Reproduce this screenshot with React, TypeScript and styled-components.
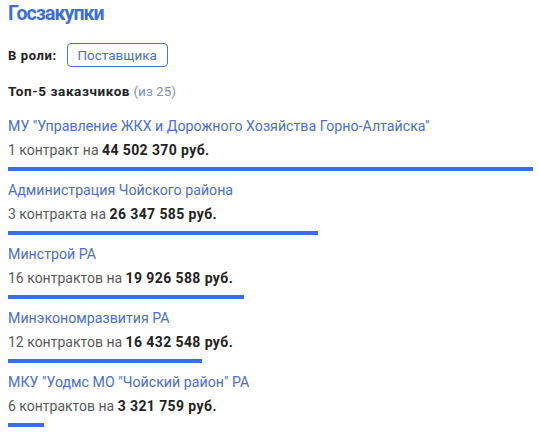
import React from 'react'
import styled, { createGlobalStyle } from 'styled-components'

const GlobalStyle = createGlobalStyle`
  body {
    margin: 0;
    background: #ffffff;
    font-family: Roboto, "Noto Sans", sans-serif;
  }
`

const customers = [
  { name: 'МУ "Управление ЖКХ и Дорожного Хозяйства Горно-Алтайска"', count: '1 контракт', sum: '44 502 370 руб.', width: 525 },
  { name: 'Администрация Чойского района', count: '3 контракта', sum: '26 347 585 руб.', width: 310 },
  { name: 'Минстрой РА', count: '16 контрактов', sum: '19 926 588 руб.', width: 236 },
  { name: 'Минэкономразвития РА', count: '12 контрактов', sum: '16 432 548 руб.', width: 194 },
  { name: 'МКУ "Уодмс МО "Чойский район" РА', count: '6 контрактов', sum: '3 321 759 руб.', width: 36 },
]

export default function App() {
  return <>
    <GlobalStyle />
    <Panel>
      <Title>Госзакупки</Title>
      <RoleRow>
        <Label>В роли:</Label>
        <Badge>Поставщика</Badge>
      </RoleRow>
      <Heading>
        <b>Топ-5 заказчиков</b> <Muted>(из 25)</Muted>
      </Heading>
      {customers.map(c => (
        <Item key={c.name}>
          <Name>{c.name}</Name>
          <Stats>{c.count} на <b>{c.sum}</b></Stats>
          <Bar style={{ width: c.width }} />
        </Item>
      ))}
    </Panel>
  </>
}

const Panel = styled.div`
  padding: 0 8px;
  display: flex;
  flex-direction: column;
`
const Title = styled.h2`
  margin: 0;
  font-size: 19.5px;
  line-height: 28px;
  font-weight: 700;
  letter-spacing: -0.9px;
  color: #3a6ed9;
`
const RoleRow = styled.div`
  display: flex;
  align-items: center;
  gap: 10px;
  margin-top: 15px;
`
const Label = styled.span`
  font-size: 13px;
  font-weight: 700;
  letter-spacing: 0.6px;
  color: #222;
`
const Badge = styled.span`
  box-sizing: border-box;
  height: 24px;
  width: 101px;
  display: flex;
  align-items: center;
  justify-content: center;
  border: 1px solid #4d72cf;
  border-radius: 4px;
  font-size: 13.5px;
  color: #4d6fc9;
`
const Heading = styled.div`
  margin-top: 12px;
  font-size: 13.5px;
  line-height: 24px;
  color: #222;
  & b { font-weight: 700; letter-spacing: 0.6px; }
`
const Muted = styled.span`
  color: #7c8fc9;
`
const Item = styled.div`
  margin-top: 11px;
  display: flex;
  flex-direction: column;
  & + & { margin-top: 7px; }
`
const Name = styled.a`
  font-size: 14.2px;
  line-height: 24px;
  color: #4b6ecf;
  cursor: pointer;
`
const Stats = styled.div`
  font-size: 14px;
  line-height: 24px;
  color: #5a5a5a;
  & b { color: #222; font-weight: 700; letter-spacing: 0.4px; }
`
const Bar = styled.div`
  margin-top: 5px;
  height: 4px;
  background: #3a6ee8;
`
